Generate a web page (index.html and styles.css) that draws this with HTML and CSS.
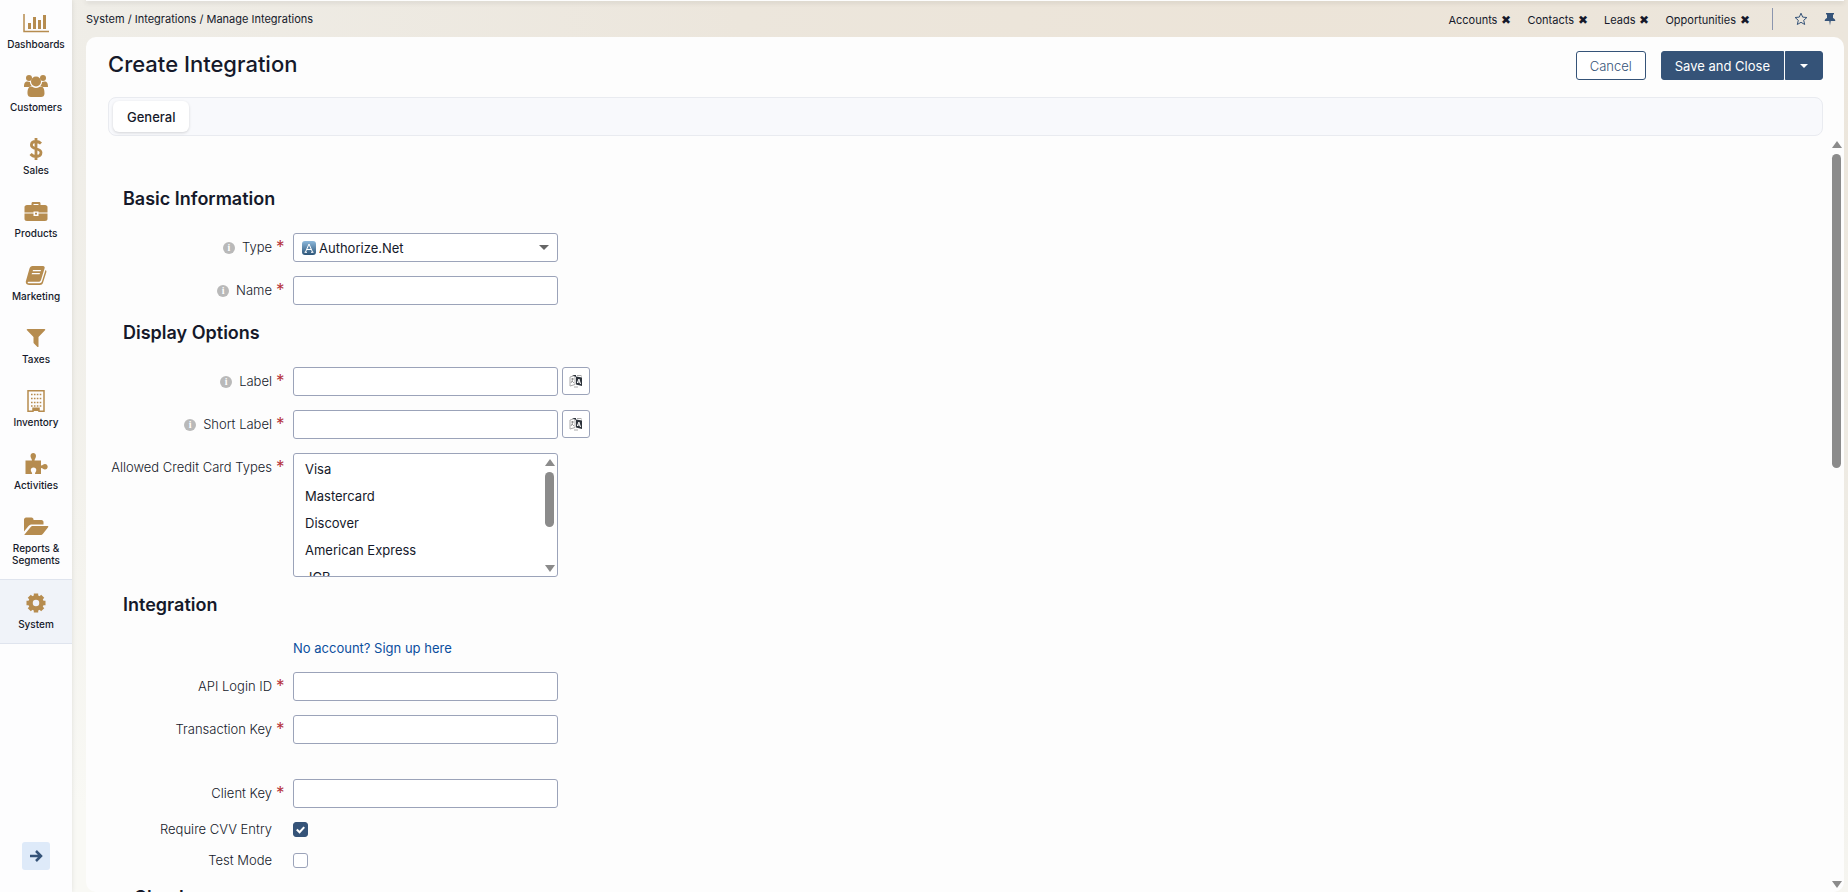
FILE: index.html
```html
<!DOCTYPE html>
<html lang="en">
<head>
    <meta charset="UTF-8">
    <meta name="viewport" content="width=device-width, initial-scale=1.0">
    <title>Create Integration - Manage Integrations - System</title>
    <link rel="stylesheet" href="styles.css">
</head>
<body>
    <nav class="sidebar">
        <a class="nav-item" href="#">
            <svg class="nav-icon" viewBox="0 0 26 24"><path d="M1 3v17.500h25" fill="none" stroke="currentColor" stroke-width="1.500"/><path d="M5 12h3v6H5zM10 6h3v12h-3zM15 9h3v9h-3zM20 4h3v14h-3z"/></svg>
            <span>Dashboards</span>
        </a>
        <a class="nav-item" href="#">
            <svg class="nav-icon" viewBox="0 0 26 24"><circle cx="6" cy="4" r="3"/><circle cx="20" cy="4" r="3"/><path d="M4.500 7.500C2 7.500 1 9 1 13h5c1.500 0 2-1 2.500-1.500C7 10 7 8.500 7 8zM21.500 7.500c2.500 0 3.500 1.500 3.500 5.500h-5c-1.500 0-2-1-2.500-1.500C19 10 19 8.500 19 8z"/><circle cx="13" cy="7.500" r="5"/><path d="M8.500 12.500C5 12.500 4.500 16 4.500 19.500c0 2.500 1.500 3.500 3.500 3.500h10c2 0 3.500-1 3.500-3.500 0-3.500-.5-7-4-7-1 0-2 1.500-4.500 1.500s-3.500-1.500-4.500-1.500z"/></svg>
            <span>Customers</span>
        </a>
        <a class="nav-item" href="#">
            <svg class="nav-icon" viewBox="0 0 26 24"><path d="M18 6.500C16.500 5 15 4.500 13 4.500c-2.800 0-4.600 1.300-4.600 3.500 0 5 9.600 2.500 9.600 7.600 0 2.400-2 3.900-5 3.900-2.200 0-4-.8-5.400-2.500M13 1v22" fill="none" stroke="currentColor" stroke-width="2.800"/></svg>
            <span>Sales</span>
        </a>
        <a class="nav-item" href="#">
            <svg class="nav-icon" viewBox="0 0 26 24"><path d="M8.500 5V3.500C8.500 2.500 9 2 10 2h6c1 0 1.500.5 1.500 1.500V5H22c1.500 0 2.500 1 2.500 2v5.500h-9V11.500h-5v1h-9V7c0-1 1-2 2.500-2zm2-1v1h5V4zM1.500 13.500h9V16h5v-2.500h9V19c0 1-1 2-2.500 2H4c-1.500 0-2.500-1-2.500-2zM12 12.800h2v1.700h-2z" fill-rule="evenodd"/></svg>
            <span>Products</span>
        </a>
        <a class="nav-item" href="#">
            <svg class="nav-icon" viewBox="0 0 26 24"><path d="M9.500 3H20c1.300 0 2 1 1.600 2.200L18 17c-.4 1.200-1.200 1.800-2.500 1.800H5.500c-1 0-1.200 1.400 0 1.400h11c1.200 0 2-.6 2.400-1.700L22.500 7c1 .5 1.100 1.300.8 2.300l-3.300 10.500c-.5 1.500-1.600 2.200-3 2.200H6c-2.300 0-3.800-2-3-4.200L6.500 5.500C7 4 8 3 9.500 3zM10 7l-.4 1.300h8L18 7zM9 10l-.4 1.300h8L17 10z" fill-rule="evenodd"/></svg>
            <span>Marketing</span>
        </a>
        <a class="nav-item" href="#">
            <svg class="nav-icon" viewBox="0 0 26 24"><path d="M4.500 3h17c.8 0 1 .8.5 1.300L15.500 11v9.500c0 .6-.6.8-1 .4L11 17.500c-.3-.3-.5-.6-.5-1V11L4 4.300C3.500 3.800 3.700 3 4.500 3z"/></svg>
            <span>Taxes</span>
        </a>
        <a class="nav-item" href="#">
            <svg class="nav-icon" viewBox="0 0 26 24"><path d="M5 1.700h16v20.600h-5v-3h-6v3H5z" fill="none" stroke="currentColor" stroke-width="1.500"/><path d="M8 5.500h10.500M8 9.500h10.500M8 13.500h10.500M8 17h10.500" fill="none" stroke="currentColor" stroke-width="1.600" stroke-dasharray="1.600 1.300"/><path d="M10 19h6v3h-6z"/></svg>
            <span>Inventory</span>
        </a>
        <a class="nav-item" href="#">
            <svg class="nav-icon" viewBox="0 0 26 24"><path d="M2.500 8.500H9C9 7 7.500 6 7.500 4c0-1.800 1.200-3 2.700-3S13 2.200 13 4c0 2-1.500 3-1.500 4.500H18v5c2 0 2-1.500 4-1.500 1.500 0 2.700 1.200 2.700 2.700S23.500 17.500 22 17.500c-2 0-2-1.500-4-1.500v6h-6c0-2 1.300-2 1.300-4 0-1.500-1-2.500-2.800-2.500S7.800 16.500 7.800 18c0 2 1.400 2 1.400 4H2.500z"/></svg>
            <span>Activities</span>
        </a>
        <a class="nav-item" href="#">
            <svg class="nav-icon" viewBox="0 0 26 24"><path d="M1 4.500C1 3.500 2 2.500 3 2.500h5.500c1.200 0 2 1 2 2V5h8c1.200 0 2 1 2 2v2.500H9c-1.500 0-2.800.6-3.700 1.700L1 16.500zM1.500 19.500l6-7.200c.6-.8 1.500-1.300 2.500-1.300h14.500c.8 0 1 .6.600 1.200L20 18.700c-.6.8-1.500 1.300-2.500 1.300H2c-.6 0-.8-.1-.5-.5z"/></svg>
            <span>Reports &amp; Segments</span>
        </a>
        <a class="nav-item active" href="#">
            <svg class="nav-icon" viewBox="0 0 26 24"><circle cx="13" cy="12" r="5.500" fill="none" stroke="currentColor" stroke-width="4.500"/><path d="M13 2.500v19M3.500 12h19M6.300 5.300l13.400 13.400M19.700 5.300L6.300 18.700" fill="none" stroke="currentColor" stroke-width="4.400" stroke-dasharray="4 11 4"/></svg>
            <span>System</span>
        </a>
        <button class="sidebar-toggle" type="button" aria-label="Expand menu">
            <svg viewBox="0 0 14 14"><path d="M1 7h11M7 2l5 5-5 5" fill="none" stroke="currentColor" stroke-width="2.500"/></svg>
        </button>
    </nav>

    <div class="page">
        <div class="page-strip"></div>
        <div class="topbar">
            <div class="breadcrumb">System / Integrations / Manage Integrations</div>
            <div class="pins">
                <span class="pin"><a href="#">Accounts</a><button type="button" aria-label="Unpin Accounts">✖</button></span>
                <span class="pin"><a href="#">Contacts</a><button type="button" aria-label="Unpin Contacts">✖</button></span>
                <span class="pin"><a href="#">Leads</a><button type="button" aria-label="Unpin Leads">✖</button></span>
                <span class="pin"><a href="#">Opportunities</a><button type="button" aria-label="Unpin Opportunities">✖</button></span>
            </div>
            <div class="page-tools">
                <button type="button" aria-label="Add to favorites">
                    <svg viewBox="0 0 14 14"><path d="M7 1.200l1.700 3.900 4.200.4-3.200 2.800 1 4.200L7 10.300l-3.700 2.200 1-4.200L1.100 5.500l4.200-.4z" fill="none" stroke="currentColor"/></svg>
                </button>
                <button type="button" aria-label="Pin page">
                    <svg viewBox="0 0 14 14"><path d="M3 1h8v1.500h-1V6c1.500.7 2.300 1.700 2.300 3H7.700L7 13.500 6.300 9H1.700c0-1.300.8-2.300 2.300-3V2.500H3z"/></svg>
                </button>
            </div>
        </div>

        <main class="panel">
            <div class="panel-header">
                <h1>Create Integration</h1>
                <div class="actions">
                    <button class="btn btn-outline" type="button">Cancel</button>
                    <div class="btn-group">
                        <button class="btn btn-primary" type="submit" form="integration">Save and Close</button>
                        <button class="btn btn-primary btn-caret" type="button" aria-label="More save options"><span class="caret"></span></button>
                    </div>
                </div>
            </div>
            <div class="tabs">
                <button class="tab" type="button">General</button>
            </div>

            <div class="scroll-area">
                <form class="form" id="integration">
                    <h2>Basic Information</h2>
                    <div class="row">
                        <label for="type"><span class="info">i</span>Type</label>
                        <em>*</em>
                        <div class="select-box">
                            <svg class="type-logo" viewBox="0 0 14 14"><defs><linearGradient id="logo" x2="0" y2="1"><stop stop-color="#8db9dc"/><stop offset="1" stop-color="#2d5578"/></linearGradient></defs><rect width="14" height="14" rx="3" fill="url(#logo)"/><path d="M3.500 11L7 3l3.500 8M5 8.500h4M2.500 11.300h2.500M9 11.300h2.500" fill="none" stroke="#fff"/></svg>
                            <select id="type">
                                <option>Authorize.Net</option>
                            </select>
                            <span class="caret"></span>
                        </div>
                    </div>
                    <div class="row">
                        <label for="name"><span class="info">i</span>Name</label>
                        <em>*</em>
                        <input class="field" type="text" id="name">
                    </div>

                    <h2>Display Options</h2>
                    <div class="row">
                        <label for="label"><span class="info">i</span>Label</label>
                        <em>*</em>
                        <input class="field" type="text" id="label">
                        <button class="translate" type="button" aria-label="Translate label">
                            <svg viewBox="0 0 14 14"><path d="M1 3l5-1.500v9L1 12zM8 1.500h4M12.500 1.500v1M5 13h4" fill="none" stroke="#aaa"/><path d="M3 1h4v1.500l6 1V12l-6-1.500V3z"/><path d="M8.300 9l1.600-4L11.500 10M8.800 8h2.200" fill="none" stroke="#fff"/><path d="M2 5h3M3.500 4v2L2 9M3 7l2 2" fill="none" stroke="#777" stroke-width=".7"/></svg>
                        </button>
                    </div>
                    <div class="row">
                        <label for="short-label"><span class="info">i</span>Short Label</label>
                        <em>*</em>
                        <input class="field" type="text" id="short-label">
                        <button class="translate" type="button" aria-label="Translate short label">
                            <svg viewBox="0 0 14 14"><path d="M1 3l5-1.500v9L1 12zM8 1.500h4M12.500 1.500v1M5 13h4" fill="none" stroke="#aaa"/><path d="M3 1h4v1.500l6 1V12l-6-1.500V3z"/><path d="M8.300 9l1.600-4L11.500 10M8.800 8h2.200" fill="none" stroke="#fff"/><path d="M2 5h3M3.500 4v2L2 9M3 7l2 2" fill="none" stroke="#777" stroke-width=".7"/></svg>
                        </button>
                    </div>
                    <div class="row">
                        <label for="cards">Allowed Credit Card Types</label>
                        <em>*</em>
                        <div class="list-box">
                            <select id="cards" multiple>
                                <option>Visa</option>
                                <option>Mastercard</option>
                                <option>Discover</option>
                                <option>American Express</option>
                                <option>JCB</option>
                            </select>
                            <div class="scrollbar"><i class="arrow-up"></i><i class="thumb"></i><i class="arrow-down"></i></div>
                        </div>
                    </div>

                    <h2>Integration</h2>
                    <a class="signup" href="#">No account? Sign up here</a>
                    <div class="row">
                        <label for="api-login">API Login ID</label>
                        <em>*</em>
                        <input class="field" type="text" id="api-login">
                    </div>
                    <div class="row row-spaced">
                        <label for="transaction-key">Transaction Key</label>
                        <em>*</em>
                        <input class="field" type="text" id="transaction-key">
                    </div>
                    <div class="row">
                        <label for="client-key">Client Key</label>
                        <em>*</em>
                        <input class="field" type="text" id="client-key">
                    </div>
                    <div class="row row-check">
                        <label for="cvv">Require CVV Entry</label>
                        <input class="check" type="checkbox" id="cvv" checked>
                    </div>
                    <div class="row row-check">
                        <label for="test-mode">Test Mode</label>
                        <input class="check" type="checkbox" id="test-mode">
                    </div>
                    <h2>eCheck</h2>
                </form>
                <div class="scrollbar page-scrollbar"><i class="arrow-up"></i><i class="thumb"></i><i class="arrow-down"></i></div>
            </div>
        </main>
    </div>
</body>
</html>
```
FILE: styles.css
```css
* {
    margin: 0;
    padding: 0;
    box-sizing: border-box;
}

body {
    display: flex;
    height: 100vh;
    overflow: hidden;
    font-family: Inter, sans-serif;
    font-size: 13px;
    color: #15192a;
    background: radial-gradient(ellipse 100% 120% at 70% 0, #ece4d8 0, #ece6dc 30%, #efede7 65%, #f9f9f5 100%);
}

button,
input,
select {
    font: inherit;
    color: inherit;
}

button {
    cursor: pointer;
    background: none;
    border: none;
}

a {
    color: inherit;
    text-decoration: none;
}

svg {
    display: block;
    fill: currentColor;
}

.sidebar {
    flex: none;
    display: flex;
    flex-direction: column;
    width: 72px;
    background: #fdfdfe;
    box-shadow: 0 0 5px rgba(0, 0, 0, 0.1);
}

.nav-item {
    display: flex;
    flex-direction: column;
    align-items: center;
    gap: 3px;
    padding: 11px 6px 13px;
    font-size: 10px;
    font-weight: 500;
    line-height: 12px;
    text-align: center;
}

.nav-item.active {
    background: #f0f3f9;
    border: 1px solid #dfe4ee;
    border-width: 1px 0;
}

.nav-icon {
    width: 26px;
    height: 24px;
    color: #b68c4f;
}

.sidebar-toggle {
    display: grid;
    place-items: center;
    width: 28px;
    height: 28px;
    margin: auto auto 22px;
    border-radius: 3px;
    background: #deeaf9;
    color: #355378;
}

.sidebar-toggle svg {
    width: 14px;
}

.page {
    flex: 1;
    min-width: 0;
    display: flex;
    flex-direction: column;
    padding: 0 4px 0 14px;
}

.page-strip {
    height: 1px;
    background: #fdfdfd;
    box-shadow: 0 1px 5px rgba(0, 0, 0, 0.3);
}

.topbar {
    display: flex;
    align-items: center;
    height: 36px;
    font-size: 11px;
}

.pins {
    display: flex;
    gap: 16px;
    margin-left: auto;
}

.pin button {
    margin-left: 4px;
    font-size: 12px;
}

.page-tools {
    display: flex;
    gap: 15px;
    margin-left: 22px;
    padding: 4px 7px 4px 21px;
    border-left: 1px solid #8b95ae;
    color: #355378;
}

.page-tools svg {
    width: 14px;
}

.panel {
    flex: 1;
    min-height: 0;
    display: flex;
    flex-direction: column;
    background: #fdfdfd;
    border-radius: 10px;
}

.panel-header {
    display: flex;
    align-items: flex-start;
    justify-content: space-between;
    padding: 14px 21px 17px 22px;
}

h1 {
    font-size: 22px;
    font-weight: 500;
    line-height: 26px;
}

.actions {
    display: flex;
    gap: 15px;
}

.btn {
    height: 29px;
    padding: 0 13px;
    border: 1px solid #355378;
    border-radius: 3px;
    line-height: 20px;
}

.btn-outline {
    background: #fff;
    color: #355378;
    font-weight: 300;
}

.btn-primary {
    background: #355378;
    color: #fff;
}

.btn-group {
    display: flex;
    gap: 1px;
}

.btn-group .btn:first-child {
    border-radius: 3px 0 0 3px;
}

.btn-group .btn-caret {
    padding: 0 14px;
    border-radius: 0 3px 3px 0;
}

.caret {
    display: block;
    border: 4px solid transparent;
    border-top-color: currentColor;
    border-bottom: none;
}

.tabs {
    margin: 0 21px 0 22px;
    padding: 3px 4px;
    border: 1px solid #e9ebf0;
    border-radius: 8px;
    background: #f8f9fc;
}

.tab {
    display: block;
    height: 31px;
    padding: 0 14px;
    border-radius: 6px;
    background: #fff;
    box-shadow: 0 1px 3px rgba(0, 0, 0, 0.15);
    font-weight: 500;
}

.scroll-area {
    flex: 1;
    min-height: 0;
    display: flex;
    overflow: hidden;
}

.form {
    flex: 1;
    padding: 49px 0 0 29px;
}

h2 {
    margin: 0 0 20px 8px;
    font-size: 18px;
    font-weight: 600;
    line-height: 28px;
}

.row {
    display: flex;
    align-items: flex-start;
    margin-bottom: 14px;
}

.row label {
    display: flex;
    align-items: center;
    justify-content: flex-end;
    width: 157px;
    line-height: 29px;
    font-weight: 300;
    white-space: nowrap;
}

.row em {
    width: 21px;
    padding-left: 4px;
    color: #b5323c;
    font-style: normal;
    font-size: 17px;
    line-height: 28px;
}

.row-spaced {
    margin-bottom: 35px;
}

.info {
    width: 12px;
    height: 12px;
    margin-right: 7px;
    border-radius: 50%;
    background: #b9b9b9;
    color: #fff;
    font: bold 10px/12px "Liberation Serif", serif;
    text-align: center;
}

.field,
.select-box,
.list-box {
    width: 265px;
    height: 29px;
    border: 1px solid #9ba3b9;
    border-radius: 3px;
    background: #fff;
}

.field {
    padding: 0 8px;
}

.select-box {
    display: flex;
    align-items: center;
    gap: 3px;
    padding: 0 8px;
}

.select-box select {
    flex: 1;
    border: none;
    background: none;
    appearance: none;
}

.select-box .caret {
    color: #666;
    border-width: 5px 5px 0;
}

.type-logo {
    width: 14px;
    height: 14px;
}

.translate {
    display: grid;
    place-items: center;
    width: 28px;
    height: 28px;
    margin-left: 4px;
    border: 1px solid #9ba3b9;
    border-radius: 3px;
    background: #fff;
    color: #2d333b;
}

.translate svg {
    width: 14px;
}

.list-box {
    display: flex;
    height: 124px;
}

.list-box select {
    flex: 1;
    height: 122px;
    padding: 7px 0 0 7px;
    border: none;
    background: none;
    overflow: hidden;
    outline: none;
}

.list-box option {
    min-height: 27px;
    padding: 0 4px;
    line-height: 27px;
}

.scrollbar {
    display: flex;
    flex-direction: column;
    align-items: center;
    gap: 6px;
    width: 15px;
    padding: 5px 0 4px;
}

.scrollbar .thumb {
    width: 9px;
    height: 55px;
    border-radius: 5px;
    background: #8b8b8b;
}

.arrow-up,
.arrow-down {
    border: 5px solid transparent;
}

.arrow-up {
    border-top: none;
    border-bottom: 7px solid #8b8b8b;
}

.arrow-down {
    margin-top: auto;
    border-bottom: none;
    border-top: 7px solid #8b8b8b;
}

.page-scrollbar .thumb {
    height: 42%;
}

.signup {
    display: block;
    width: max-content;
    margin: 0 0 15px 178px;
    line-height: 18px;
    color: #0b4f9e;
}

.row-check {
    margin-bottom: 16px;
}

.row-check label {
    line-height: 15px;
}

.check {
    appearance: none;
    width: 15px;
    height: 15px;
    margin-left: 21px;
    border: 1px solid #9ba3b9;
    border-radius: 3px;
    background: #fff;
}

.check:checked {
    border-color: #355378;
    background: #355378 url("data:image/svg+xml,%3Csvg xmlns='http://www.w3.org/2000/svg' viewBox='0 0 14 14'%3E%3Cpath d='M3 7l3 3 5-5.500' fill='none' stroke='%23fff' stroke-width='2.200'/%3E%3C/svg%3E") center / 13px no-repeat;
}
```
